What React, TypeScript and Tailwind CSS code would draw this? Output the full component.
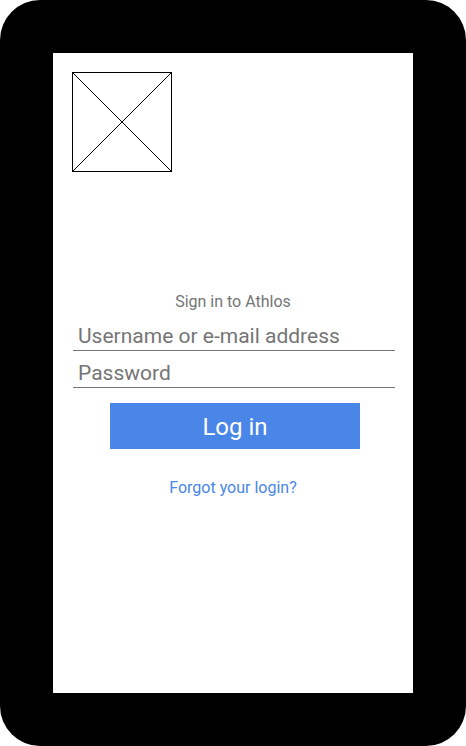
export default function App() {
    return (
        <div className="w-[466px] h-[746px] bg-white">
            <div className="w-[466px] h-[746px] bg-black rounded-[40px] p-[53px]" style={{ fontFamily: 'Roboto, "Liberation Sans", sans-serif' }}>
                <div className="w-[360px] h-[640px] bg-white flex flex-col">
                    {/* placeholder image */}
                    <div className="ml-[19px] mt-[19px] w-[100px] h-[100px]">
                        <svg width="100" height="100" viewBox="0 0 100 100">
                            <rect x="0.5" y="0.5" width="99" height="99" fill="none" stroke="#000" strokeWidth="1" />
                            <line x1="0.5" y1="0.5" x2="99.5" y2="99.5" stroke="#000" strokeWidth="1" />
                            <line x1="99.5" y1="0.5" x2="0.5" y2="99.5" stroke="#000" strokeWidth="1" />
                        </svg>
                    </div>

                    <p className="mt-[120px] text-center text-[16px] leading-[19px] text-[#757575]">Sign in to Athlos</p>

                    <div className="mt-[13px] ml-[20px] w-[322px] border-b border-[#757575] pl-[5px] pb-[2px] text-[21px] leading-[24px] text-[#757575]">
                        Username or e-mail address
                    </div>
                    <div className="mt-[10px] ml-[20px] w-[322px] border-b border-[#757575] pl-[5px] pb-[2px] text-[21px] leading-[24px] text-[#757575]">
                        Password
                    </div>

                    <button className="mt-[15px] ml-[57px] w-[250px] h-[46px] bg-[#4a86e8] text-white text-[24px] leading-[48px]">
                        Log in
                    </button>

                    <a href="#" className="mt-[29px] text-center text-[16px] leading-[19px] text-[#4a86e8]">
                        Forgot your login?
                    </a>
                </div>
            </div>
        </div>
    );
}
